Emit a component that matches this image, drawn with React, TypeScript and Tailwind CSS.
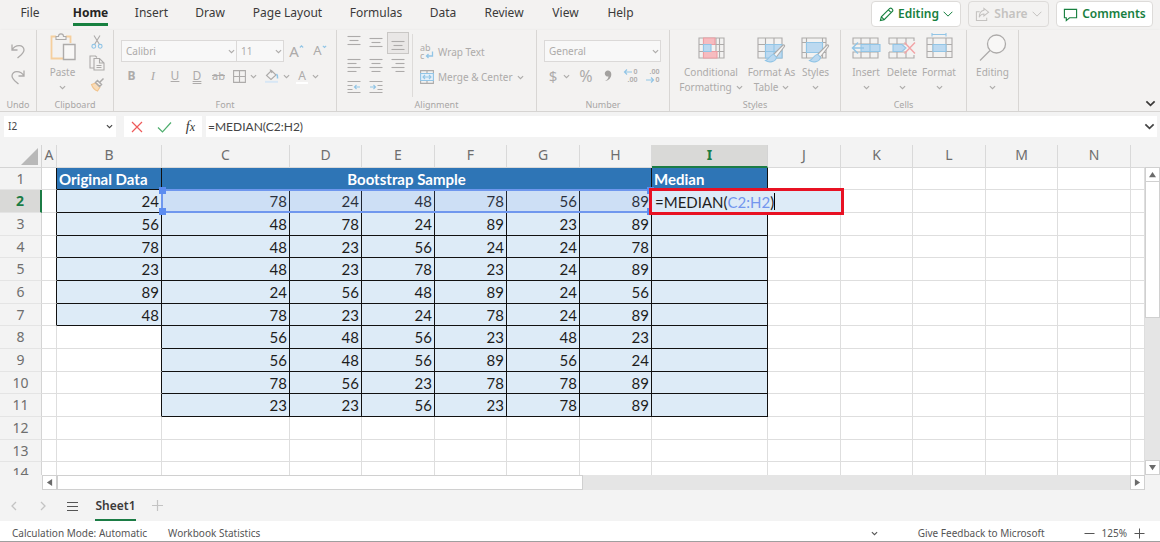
import React from "react";

type Kids = { children?: React.ReactNode };

const INK = "#adabaa";
const SKY = "#92c5e6";
const FILL = "#bcd9f0";

function Chevron({ className = "size-[7px]", thin }: { className?: string; thin?: boolean }) {
  return (
    <svg viewBox="0 0 8 8" className={"shrink-0 " + className} fill="none" stroke="currentColor" strokeWidth={thin ? 0.8 : 1.3}>
      <path d={thin ? "M0.500 2.200 4 5.700 7.500 2.200" : "M1 2.500 4 5.300 7 2.500"} />
    </svg>
  );
}

function Icon({ w, h, children }: Kids & { w: number; h: number }) {
  return (
    <svg viewBox={`0 0 ${w} ${h}`} width={w} height={h} className="shrink-0" fill="none" stroke={INK} strokeWidth="1.1">
      {children}
    </svg>
  );
}

function Group({ label, width, children }: Kids & { label?: string; width: string }) {
  return (
    <section className={"flex flex-col border-r border-[#d8d6d4] " + width}>
      <div className="h-[69px]">{children}</div>
      <div className="text-center text-[9px] leading-[12px] text-[#a8a6a5]">{label}</div>
    </section>
  );
}

function BigButton({ icon, lines, width, inline }: { icon: React.ReactNode; lines: string[]; width: string; inline?: boolean }) {
  return (
    <button className={"flex shrink-0 flex-col items-center pt-[7px] text-[10px] leading-[15px] text-[#adabaa] " + width}>
      <span className="flex h-7 items-start justify-center">{icon}</span>
      <span className="whitespace-nowrap">{lines[0]}</span>
      <span className="flex h-[15px] items-center gap-1 whitespace-nowrap">
        {inline ? lines[1] : null}
        <Chevron />
      </span>
    </button>
  );
}

function TinyButton({ label, width, children }: Kids & { label: string; width: string }) {
  return (
    <button aria-label={label} className={"flex h-5 shrink-0 items-center justify-center text-[#adabaa] " + width}>
      {children}
    </button>
  );
}

function Lines({ rows }: { rows: [number, number, number][] }) {
  return (
    <Icon w={14} h={14}>
      {rows.map(([x1, x2, y]) => (
        <path key={y} d={`M${x1} ${y}H${x2}`} />
      ))}
    </Icon>
  );
}

function PasteIcon() {
  return (
    <Icon w={26} h={28}>
      <path d="M6 3.500H1.500V25.500H13M16 3.500H20.500V10" stroke="#f5cf9e" strokeWidth="1.800" />
      <path d="M6 6.500V3.500H8.500C8.500 0 13.500 0 13.500 3.500H16V6.500Z" />
      <path d="M13.500 11.500H25V26.500H13.500Z" fill="#f8f7f6" strokeWidth="1.400" />
    </Icon>
  );
}

function ConditionalIcon() {
  return (
    <Icon w={27} h={22}>
      <path d="M1 1H26V21H1ZM1 7.500H26M1 14.500H26M5.500 1V21M18 1V21M21.500 1V21" />
      <path d="M5.500 1H17V7.500H5.500ZM5.500 14.500H19V21H5.500Z" fill="#f6bcc0" stroke="#ee9ea4" />
      <path d="M5.500 7.500H13V14.500H5.500Z" fill={FILL} stroke={SKY} />
    </Icon>
  );
}

function Brush() {
  return (
    <>
      <path d="M16 18 25.500 8.500C27 7 28.500 8.500 27 10L19 20.500Z" fill="#f8f7f6" stroke={INK} />
      <path d="M17 17.500C13 17 13 22 8.500 23.500C12 26 18.500 25 19.500 20.500Z" fill={FILL} stroke={SKY} />
    </>
  );
}

function FormatTableIcon() {
  return (
    <Icon w={29} h={26}>
      <path d="M1 1H25V21H1ZM1 7.500H25M1 14.500H25M8.500 1V21M17 1V21" />
      <path d="M8.500 7.500H25V21H8.500Z" fill={FILL} stroke={SKY} />
      <path d="M8.500 14.500H25M17 7.500V21" stroke={SKY} />
      <Brush />
    </Icon>
  );
}

function StylesIcon() {
  return (
    <Icon w={29} h={26}>
      <path d="M1 1H25V21H1ZM1 5.500H25M1 15.500H25M5.500 1V21M21.500 1V21" />
      <path d="M5.500 5.500H21.500V15.500H5.500Z" fill={FILL} stroke={SKY} />
      <Brush />
    </Icon>
  );
}

function InsertIcon() {
  return (
    <Icon w={30} h={22}>
      <path d="M2 7V1H27V7ZM2 15V21H27V15ZM10 1V7M19 1V7M10 15V21M19 15V21" />
      <path d="M10 7.500H29V14.500H10ZM19 7.500V14.500" fill={FILL} stroke={SKY} />
      <path d="M13 11H2M7 5.500 1.500 11 7 16.500" stroke={SKY} strokeWidth="1.500" />
    </Icon>
  );
}

function DeleteIcon() {
  return (
    <Icon w={28} h={22}>
      <path d="M1 7V1H26V4M1 7H18M1 15V21H26V18M1 15H18M9 1V7M18 1V7M9 15V21M18 15V21" />
      <path d="M5 7.500H14L18 11 14 14.500H5Z" fill={FILL} stroke={SKY} />
      <path d="M16.500 5.500 27 16.500M27 5.500 16.500 16.500" stroke="#f2a3a6" strokeWidth="1.400" />
    </Icon>
  );
}

function FormatIcon() {
  return (
    <Icon w={27} h={26}>
      <path d="M6 1.500H20M6 0V3.500M20 0V3.500" stroke={SKY} />
      <path d="M1 5H26V24.500H1ZM1 11.500H26M1 18.500H26M7 5V24.500M20 5V24.500" />
      <path d="M7 11.500H20V18.500H7Z" fill={FILL} stroke={SKY} />
    </Icon>
  );
}

const TABS = [
  ["File", "w-[60px]"],
  ["Home", "w-[61px]"],
  ["Insert", "w-[61px]"],
  ["Draw", "w-[56px]"],
  ["Page Layout", "w-[99px]"],
  ["Formulas", "w-[78px]"],
  ["Data", "w-[56px]"],
  ["Review", "w-[66px]"],
  ["View", "w-[57px]"],
  ["Help", "w-[53px]"],
];

function TopBar() {
  return (
    <header className="flex h-[30px] justify-between">
      <nav className="flex text-[#3b3a39]">
        {TABS.map(([name, width]) => (
          <button key={name} className={"flex h-[26px] flex-col items-center whitespace-nowrap text-[12px] leading-[26px] " + width}>
            <span className={name === "Home" ? "h-[26px] border-b-[3px] border-[#17803f] font-bold text-[#252423]" : ""}>{name}</span>
          </button>
        ))}
      </nav>
      <div className="flex items-start gap-[7px] pr-[7px] pt-px text-[12px] font-semibold text-[#17803f]">
        <button className="flex h-[26px] w-[90px] items-center justify-center gap-1 rounded-sm border border-[#dddbd9] bg-white">
          <svg viewBox="0 0 16 16" className="size-[15px]" fill="none" stroke="currentColor" strokeWidth="1.200">
            <path d="M1.500 14.500 2.500 10.500 11.500 1.500C13 0.500 15.500 3 14.500 4.500L5.500 13.500ZM10 3 13 6M2.500 10.500 5.500 13.500" />
          </svg>
          Editing
          <Chevron thin className="size-[10px]" />
        </button>
        <button className="flex h-[26px] w-[81px] items-center justify-center gap-1 rounded-sm border border-[#dddbd9] text-[#c4c2c0]">
          <svg viewBox="0 0 16 16" className="size-[15px]" fill="none" stroke="currentColor" strokeWidth="1.100">
            <path d="M5 5H1.500V14.500H12.500V11.500M9.500 1.500 14.500 5.500 9.500 9.500V7.500C7 7.500 5.500 8.500 4.500 11C4.500 6.500 7 4 9.500 3.500Z" />
          </svg>
          Share
          <Chevron thin className="size-[10px]" />
        </button>
        <button className="flex h-[26px] w-[97px] items-center justify-center gap-1 rounded-sm border border-[#dddbd9] bg-white">
          <svg viewBox="0 0 16 16" className="size-[15px]" fill="none" stroke="currentColor" strokeWidth="1.200">
            <path d="M1.500 2.500H14.500V11.500H7L3.500 14.500V11.500H1.500Z" />
          </svg>
          Comments
        </button>
      </div>
    </header>
  );
}

function FakeSelect({ label, value, width }: { label: string; value: string; width: string }) {
  return (
    <span className={"flex h-[22px] items-center border border-[#dbd9d8] bg-[#f8f8f8] pr-px text-[#adabaa] " + width}>
      <select aria-label={label} className="w-full min-w-0 flex-1 appearance-none bg-transparent pl-1 text-[10px] outline-none" defaultValue={value}>
        <option>{value}</option>
      </select>
      <Chevron />
    </span>
  );
}

function Decimals({ top, bottom, arrow }: { top: string; bottom: string; arrow: string }) {
  return (
    <span className="relative flex w-[15px] flex-col items-end text-[7px] font-semibold leading-[8px]">
      <span>{top}</span>
      <span>{bottom}</span>
      <svg viewBox="0 0 15 16" className="absolute inset-0 h-4 w-[15px]" fill="none" stroke={SKY} strokeWidth="1.200">
        <path d={arrow} />
      </svg>
    </span>
  );
}

function Ribbon() {
  return (
    <div className="flex h-[82px] border-b border-[#d6d4d2] shadow-sm">
      <Group label="Undo" width="w-[37px]">
        <div className="flex flex-col items-center gap-[6px] pt-[11px]">
          <TinyButton label="Undo" width="w-6">
            <Icon w={16} h={16}>
              <path d="M2 1.500V7H7.500M2 7C5 1.500 14 1 14 7C14 10 11 12 7.500 15" strokeWidth="1.300" />
            </Icon>
          </TinyButton>
          <TinyButton label="Redo" width="w-6">
            <Icon w={16} h={16}>
              <path d="M14 1.500V7H8.500M14 7C11 1.500 2 1 2 7C2 10 5 12 8.500 15" strokeWidth="1.300" />
            </Icon>
          </TinyButton>
        </div>
      </Group>
      <Group label="Clipboard" width="w-[77px]">
        <div className="flex">
          <BigButton icon={<span className="-mt-1"><PasteIcon /></span>} lines={["Paste"]} width="w-[51px]" />
          <div className="flex flex-col items-center gap-px pl-[1px] pt-[2px]">
            <TinyButton label="Cut" width="w-4">
              <Icon w={12} h={14}>
                <path d="M3 0.500 8.500 9.500M9 0.500 3.500 9.500" />
                <circle cx="2.800" cy="11.300" r="1.900" stroke={SKY} />
                <circle cx="9.200" cy="11.300" r="1.900" stroke={SKY} />
              </Icon>
            </TinyButton>
            <TinyButton label="Copy" width="w-4">
              <Icon w={16} h={16}>
                <path d="M5 13H1V1H6.500L8 2.500M5 3.500H10.500L15 8V15H5ZM10.500 3.500V8H15M7.500 10.500H12.500M7.500 12.500H12.500" />
              </Icon>
            </TinyButton>
            <TinyButton label="Format Painter" width="w-4">
              <Icon w={15} h={15}>
                <path d="M1.500 7.500 6 6 10 10 7.500 14C5 13 2.500 10.500 1.500 7.500Z" fill="#f8dcb9" stroke="#f2c48d" />
                <path d="M5.500 5.500 7.500 3.500 11.500 7.500 9.500 9.500ZM9.500 5.500 13.500 1.500" strokeWidth="1.500" />
              </Icon>
            </TinyButton>
          </div>
        </div>
      </Group>
      <Group label="Font" width="w-[223px]">
        <div className="flex flex-col gap-1 pl-[7px] pt-[10px]">
          <div className="flex items-center">
            <FakeSelect label="Font name" value="Calibri" width="w-[116px]" />
            <FakeSelect label="Font size" value="11" width="w-[47px] border-l-0" />
            <TinyButton label="Grow font" width="w-[25px]">
              <span className="text-[15px]">A</span>
              <svg viewBox="0 0 6 4" className="mb-2 w-[5px]" fill="none" stroke={SKY} strokeWidth="1.300"><path d="M1 3 3 1 5 3" /></svg>
            </TinyButton>
            <TinyButton label="Shrink font" width="w-[22px]">
              <span className="text-[13px]">A</span>
              <svg viewBox="0 0 6 4" className="mb-2 w-[5px]" fill="none" stroke={SKY} strokeWidth="1.300"><path d="M1 1 3 3 5 1" /></svg>
            </TinyButton>
          </div>
          <div className="flex items-center text-[12px]">
            <TinyButton label="Bold" width="w-[21px]"><b>B</b></TinyButton>
            <TinyButton label="Italic" width="w-[22px]"><i className="font-['Liberation_Serif',serif] text-[13px]">I</i></TinyButton>
            <TinyButton label="Underline" width="w-[22px]"><u>U</u></TinyButton>
            <TinyButton label="Double underline" width="w-[22px]"><span className="underline decoration-double">D</span></TinyButton>
            <TinyButton label="Strikethrough" width="w-[21px]"><span className="text-[11px] line-through">ab</span></TinyButton>
            <TinyButton label="Borders" width="w-[32px] gap-1">
              <Icon w={13} h={13}><path d="M0.600 0.600H12.400V12.400H0.600ZM6.500 0.600V12.400M0.600 6.500H12.400" /></Icon>
              <Chevron />
            </TinyButton>
            <TinyButton label="Fill colour" width="w-[32px] gap-1">
              <Icon w={14} h={14}>
                <path d="M1.500 6.500 6.500 1.500 11 6 6 10.500ZM5 0.500 7 4" />
                <path d="M11.500 5C13 6.500 12.500 8.500 12.500 9.500" stroke={SKY} strokeWidth="1.500" />
                <path d="M0 12.800H13" stroke="#d8e7f5" strokeWidth="2" />
              </Icon>
              <Chevron />
            </TinyButton>
            <TinyButton label="Font colour" width="w-[29px] gap-1">
              <span className="border-b-2 border-white px-0.5 leading-[13px]">A</span>
              <Chevron />
            </TinyButton>
          </div>
        </div>
      </Group>
      <Group label="Alignment" width="w-[200px]">
        <div className="flex">
          <div className="grid grid-cols-3 justify-items-center pl-[6px] pt-[2px]">
            <TinyButton label="Top align" width="w-[22px]"><Lines rows={[[0.5, 13.5, 1.5], [2.5, 11.5, 5.5], [0.5, 13.5, 9.5]]} /></TinyButton>
            <TinyButton label="Middle align" width="w-[22px]"><Lines rows={[[0.5, 13.5, 3.5], [2.5, 11.5, 7.5], [0.5, 13.5, 11.5]]} /></TinyButton>
            <TinyButton label="Bottom align" width="h-[22px] w-[22px] border border-[#c9c7c5] bg-[#e9e7e6]"><Lines rows={[[0.5, 13.5, 5.5], [2.5, 11.5, 9.5], [0.5, 13.5, 13.5]]} /></TinyButton>
            <TinyButton label="Align left" width="h-[22px] w-[22px]"><Lines rows={[[0.5, 13.5, 1.5], [0.5, 9.5, 5.5], [0.5, 13.5, 9.5], [0.5, 9.5, 13.5]]} /></TinyButton>
            <TinyButton label="Align centre" width="h-[22px] w-[22px]"><Lines rows={[[0.5, 13.5, 1.5], [2.5, 11.5, 5.5], [0.5, 13.5, 9.5], [2.5, 11.5, 13.5]]} /></TinyButton>
            <TinyButton label="Align right" width="h-[22px] w-[22px]"><Lines rows={[[0.5, 13.5, 1.5], [4.5, 13.5, 5.5], [0.5, 13.5, 9.5], [4.5, 13.5, 13.5]]} /></TinyButton>
            <TinyButton label="Decrease indent" width="h-[22px] w-[22px]">
              <Icon w={14} h={14}><path d="M0.500 1.500H13.500M0.500 5.500H5.500M0.500 9.500H5.500M0.500 12.500H13.500" /><path d="M13 7H7.500M9.500 5 7.500 7 9.500 9" stroke={SKY} /></Icon>
            </TinyButton>
            <TinyButton label="Increase indent" width="h-[22px] w-[22px]">
              <Icon w={14} h={14}><path d="M0.500 1.500H13.500M8.500 5.500H13.500M8.500 9.500H13.500M0.500 12.500H13.500" /><path d="M1 7H6.500M4.500 5 6.500 7 4.500 9" stroke={SKY} /></Icon>
            </TinyButton>
          </div>
          <div className="ml-[3px] mt-1 h-[63px] border-l border-[#dddbd9]" />
          <div className="flex flex-col items-start gap-[5px] pl-[7px] pt-3 text-[10px]">
            <TinyButton label="Wrap Text" width="gap-1">
              <span className="relative flex w-[14px] flex-col items-start text-[9px] leading-[8px]">
                <span>ab</span>
                <span>c</span>
                <svg viewBox="0 0 14 16" className="absolute inset-0 h-4 w-[14px]" fill="none" stroke={SKY} strokeWidth="1.300">
                  <path d="M12.500 7.500V12H6.500M8.500 10 6.500 12 8.500 14" />
                </svg>
              </span>
              Wrap Text
            </TinyButton>
            <TinyButton label="Merge & Center" width="gap-1">
              <Icon w={14} h={14}>
                <path d="M0.600 0.600H13.400V13.400H0.600ZM7 0.600V3M7 11V13.400" />
                <path d="M0.600 3.500H13.400V10.500H0.600Z" fill="#e5f0f9" stroke={SKY} />
                <path d="M3 7H11M5 5 3 7 5 9M9 5 11 7 9 9" stroke={SKY} />
              </Icon>
              Merge &amp; Center
              <Chevron />
            </TinyButton>
          </div>
        </div>
      </Group>
      <Group label="Number" width="w-[133px]">
        <div className="flex flex-col gap-1 pl-[7px] pt-[10px]">
          <FakeSelect label="Number format" value="General" width="w-[117px]" />
          <div className="flex">
            <TinyButton label="Currency" width="w-[31px] gap-[6px]"><span className="text-[15px]">$</span><Chevron /></TinyButton>
            <TinyButton label="Percent" width="w-[22px]"><span className="text-[16px]">%</span></TinyButton>
            <TinyButton label="Comma" width="w-[22px]">
              <svg viewBox="0 0 8 12" className="h-3 w-2" fill="#a3a19f"><path d="M4 0.500A3 3 0 1 0 4.500 6.400C4.300 8.500 3 10 1 11C5 10.500 7.500 7.500 7.300 4C7.200 1.800 5.800 0.500 4 0.500Z" /></svg>
            </TinyButton>
            <TinyButton label="Increase decimal" width="w-[22px]">
              <Decimals top="0" bottom=".00" arrow="M9 4H1.500M4 1.500 1.500 4 4 6.500" />
            </TinyButton>
            <TinyButton label="Decrease decimal" width="w-[22px]">
              <Decimals top=".00" bottom="0" arrow="M1 12H8.500M6 9.500 8.500 12 6 14.500" />
            </TinyButton>
          </div>
        </div>
      </Group>
      <Group label="Styles" width="w-[171px]">
        <div className="flex pl-[6px]">
          <BigButton icon={<ConditionalIcon />} lines={["Conditional", "Formatting"]} width="w-[70px]" inline />
          <BigButton icon={<FormatTableIcon />} lines={["Format As", "Table"]} width="w-[51px]" inline />
          <BigButton icon={<StylesIcon />} lines={["Styles"]} width="w-[37px]" />
        </div>
      </Group>
      <Group label="Cells" width="w-[126px]">
        <div className="flex pl-[7px]">
          <BigButton icon={<InsertIcon />} lines={["Insert"]} width="w-[36px]" />
          <BigButton icon={<DeleteIcon />} lines={["Delete"]} width="w-[36px]" />
          <BigButton icon={<span className="-mt-1"><FormatIcon /></span>} lines={["Format"]} width="w-[38px]" />
        </div>
      </Group>
      <Group width="w-[52px]">
        <BigButton
          icon={
            <span className="-mt-1">
              <Icon w={28} h={28}>
                <circle cx="17.500" cy="11" r="9" fill="#f8f7f6" strokeWidth="1.300" />
                <path d="M11 17.500 1 27.500" strokeWidth="1.300" />
              </Icon>
            </span>
          }
          lines={["Editing"]}
          width="w-full"
        />
      </Group>
      <div className="flex flex-1 items-end justify-end pb-[2px] pr-1 text-[#3b3a39]">
        <button aria-label="Collapse ribbon"><Chevron className="size-[11px]" /></button>
      </div>
    </div>
  );
}

function FormulaBar() {
  return (
    <div className="flex h-[33px] items-start gap-2 bg-[#f3f3f3] pl-1 pr-[3px] pt-1">
      <span className="flex h-[21px] w-[112px] items-center bg-white pr-[3px] text-[#444]">
        <input aria-label="Name box" defaultValue="I2" className="min-w-0 flex-1 pl-1 text-[10px] outline-none" />
        <Chevron />
      </span>
      <div className="flex h-[21px] w-[78px] items-center justify-between bg-white px-[7px]">
        <button aria-label="Cancel">
          <svg viewBox="0 0 12 12" className="size-3" fill="none" stroke="#ee5a5a" strokeWidth="1.200"><path d="M1 1 11 11M11 1 1 11" /></svg>
        </button>
        <button aria-label="Enter">
          <svg viewBox="0 0 15 12" className="h-3 w-[15px]" fill="none" stroke="#4fae6e" strokeWidth="1.200"><path d="M1 6.500 5.500 11 14 1.500" /></svg>
        </button>
        <button aria-label="Insert function" className="font-['Liberation_Serif',serif] text-[14px] italic leading-none text-[#333]">
          f<span className="text-[12px]">x</span>
        </button>
      </div>
      <span className="-ml-1 flex h-[21px] flex-1 items-center bg-white text-[#444]">
        <input aria-label="Formula bar" defaultValue="=MEDIAN(C2:H2)" className="min-w-0 flex-1 pl-[2px] font-[Lato,sans-serif] text-[12px] outline-none" />
        <Chevron className="mr-[2px] size-[11px]" />
      </span>
    </div>
  );
}

const COLS: [string, string][] = [
  ["A", "w-[15px]"],
  ["B", "w-[105px]"],
  ["C", "w-[128px]"],
  ["D", "w-[72px]"],
  ["E", "w-[73px]"],
  ["F", "w-[72px]"],
  ["G", "w-[73px]"],
  ["H", "w-[72px]"],
  ["I", "w-[116px]"],
  ["J", "w-[73px]"],
  ["K", "w-[72px]"],
  ["L", "w-[73px]"],
  ["M", "w-[72px]"],
  ["N", "w-[73px]"],
  ["", ""],
];

const ORIGINAL = [24, 56, 78, 23, 89, 48];
const SAMPLES = [
  [78, 24, 48, 78, 56, 89],
  [48, 78, 24, 89, 23, 89],
  [48, 23, 56, 24, 24, 78],
  [48, 23, 78, 23, 24, 89],
  [24, 56, 48, 89, 24, 56],
  [78, 23, 24, 78, 24, 89],
  [56, 48, 56, 23, 48, 23],
  [56, 48, 56, 89, 56, 24],
  [78, 56, 23, 78, 78, 89],
  [23, 23, 56, 23, 78, 89],
];
const SHORT_ROWS = [1, 4, 7, 10, 13];

const inTable = (row: number, col: number) =>
  (row <= 7 && col >= 1 && col <= 8) || (row <= 11 && col >= 2 && col <= 8);

function cellClass(row: number, col: number) {
  const own = inTable(row, col);
  const right = own || inTable(row, col + 1) ? " border-r-[#111]" : " border-r-[#dedede]";
  const bottom = own ? " border-b-[#111]" : " border-b-[#dedede]";
  const fill = !own ? " bg-white" : row === 1 ? " bg-[#2e75b6] font-bold text-white" : " bg-[#ddebf7] text-right text-[#1d1d1d]";
  return "relative border-r border-b p-0 whitespace-nowrap leading-[20px]" + right + bottom + fill;
}

function Handle({ place }: { place: string }) {
  return <span className={"absolute size-[7px] bg-[#5c8cf0] " + place} />;
}

function RangeOutline() {
  return (
    <div className="pointer-events-none absolute -left-px -top-px z-10 h-[24px] w-[491px] border-y-2 border-l-2 border-[#6f97ee] bg-[#6f97ee]/15">
      <Handle place="-left-1 -top-1" />
      <Handle place="-left-1 -bottom-1" />
      <Handle place="-right-[2px] -top-1" />
      <Handle place="-right-[2px] -bottom-1" />
    </div>
  );
}

function CellEditor() {
  return (
    <div
      role="textbox"
      aria-label="I2"
      className="absolute -left-[3px] -top-[2px] z-20 flex h-[27px] w-[195px] items-center border-[3px] border-[#e81123] bg-[#ddebf7] pl-[3px] text-left text-[#1d1d1d]"
    >
      =MEDIAN(<span className="text-[#7396ee]">C2:H2</span>)<span className="h-[17px] border-l border-black" />
    </div>
  );
}

function Row({ row }: { row: number }) {
  const active = row === 2;
  const header = (
    <th
      scope="row"
      className={
        "border-b border-b-[#e4e4e4] p-0 font-['Noto_Sans',sans-serif] text-[14px] leading-[20px] " +
        (active ? "border-r-2 border-r-[#1c7c45] bg-[#d9d9d7] font-bold text-[#1c7c45]" : "border-r border-r-[#d4d4d4] bg-[#f3f3f3] font-normal text-[#6e6e6e]")
      }
    >
      {row}
    </th>
  );
  const cols = COLS.map((_, i) => i);
  return (
    <tr className={SHORT_ROWS.includes(row) ? "h-[22px]" : "h-[23px]"}>
      {header}
      {row === 1
        ? cols
            .filter((c) => c < 3 || c > 7)
            .map((c) => (
              <td key={c} colSpan={c === 2 ? 6 : 1} className={cellClass(row, c) + (c === 2 ? " text-center" : " pl-[2px]")}>
                {c === 1 ? "Original Data" : c === 2 ? "Bootstrap Sample" : c === 8 ? "Median" : null}
              </td>
            ))
        : cols.map((c) => (
            <td key={c} className={cellClass(row, c) + (c === 0 || c > 8 ? "" : " pr-[2px]")}>
              {c === 1 ? ORIGINAL[row - 2] : c >= 2 && c <= 7 ? SAMPLES[row - 2]?.[c - 2] : null}
              {active && c === 2 ? <RangeOutline /> : null}
              {active && c === 8 ? <CellEditor /> : null}
            </td>
          ))}
    </tr>
  );
}

function Arrow({ label, d }: { label: string; d: string }) {
  return (
    <button aria-label={label} className="flex size-[15px] shrink-0 items-center justify-center border border-[#d0d0d0] bg-white">
      <svg viewBox="0 0 8 8" className="size-[7px]" fill="#6b6b6b"><path d={d} /></svg>
    </button>
  );
}

function Sheet() {
  return (
    <main className="flex min-h-0 flex-1 flex-col overflow-hidden bg-[#f3f3f3]">
      <div className="flex min-h-0 flex-1 overflow-hidden">
        <div className="min-w-0 flex-1 overflow-hidden">
          <table className="w-full table-fixed border-separate border-spacing-0 font-[Lato,sans-serif] text-[15px]">
            <thead className="font-['Noto_Sans',sans-serif] text-[14px] text-[#6e6e6e]">
              <tr className="h-[23px]">
                <th className="w-[42px] border-b border-r border-[#d4d4d4] p-0">
                  <svg viewBox="0 0 17 17" className="ml-[21px] size-[17px]" fill="#b8b8b8"><path d="M17 0V17H0Z" /></svg>
                </th>
                {COLS.map(([name, width]) => (
                  <th
                    key={name}
                    scope="col"
                    className={
                      "border-r p-0 align-top leading-[20px] " + width +
                      (name === "I" ? " border-b-2 border-r-[#d4d4d4] border-b-[#1c7c45] bg-[#d9d9d7] font-bold text-[#1c7c45]" : " border-b border-[#d9d9d9] font-normal") +
                      (name === "" ? " border-r-0" : "")
                    }
                  >
                    {name}
                  </th>
                ))}
              </tr>
            </thead>
            <tbody>
              {Array.from({ length: 14 }, (_, i) => (
                <Row key={i} row={i + 1} />
              ))}
            </tbody>
          </table>
        </div>
        <div className="flex w-[15px] flex-col pt-[22px]">
          <Arrow label="Scroll up" d="M4 1 8 7H0Z" />
          <div className="h-[136px] border-x border-b border-[#d0d0d0] bg-white" />
          <div className="flex-1 bg-[#e5e5e5]" />
          <Arrow label="Scroll down" d="M0 1H8L4 7Z" />
        </div>
      </div>
      <div className="flex h-[15px] pl-[42px] pr-[15px]">
        <Arrow label="Scroll left" d="M7 0V8L1 4Z" />
        <div className="w-[526px] border border-[#d0d0d0] bg-white" />
        <div className="flex-1 bg-[#e5e5e5]" />
        <Arrow label="Scroll right" d="M1 0V8L7 4Z" />
      </div>
    </main>
  );
}

function SheetTabs() {
  return (
    <div className="flex h-[31px] items-center bg-[#f3f3f3] pl-[10px] text-[#c3c3c3]">
      <button aria-label="Previous sheet">
        <svg viewBox="0 0 8 10" className="h-[10px] w-2" fill="none" stroke="currentColor" strokeWidth="1.300"><path d="M6 1 2 5 6 9" /></svg>
      </button>
      <button aria-label="Next sheet" className="ml-[21px]">
        <svg viewBox="0 0 8 10" className="h-[10px] w-2" fill="none" stroke="currentColor" strokeWidth="1.300"><path d="M2 1 6 5 2 9" /></svg>
      </button>
      <button aria-label="All sheets" className="ml-5 text-[#555]">
        <svg viewBox="0 0 11 10" className="h-[10px] w-[11px]" stroke="currentColor" strokeWidth="1.200"><path d="M0 1.500H11M0 5.500H11M0 9.500H11" /></svg>
      </button>
      <button className="ml-[17px] flex h-[31px] w-[41px] justify-center border-b-2 border-[#1c7c45] text-[12px] font-semibold leading-[31px] text-[#3b3a39]">Sheet1</button>
      <button aria-label="New sheet" className="ml-[16px]">
        <svg viewBox="0 0 11 11" className="size-[11px]" stroke="currentColor" strokeWidth="1.200"><path d="M5.500 0V11M0 5.500H11" /></svg>
      </button>
    </div>
  );
}

function StatusBar() {
  return (
    <footer className="flex h-[21px] items-start border-b border-[#9f9f9f] bg-white pl-3 pr-[15px] pt-[2px] text-[10px] leading-[20px] text-[#555]">
      <span>Calculation Mode: Automatic</span>
      <span className="ml-[21px]">Workbook Statistics</span>
      <div className="ml-auto flex items-center">
        <button aria-label="Status options"><Chevron /></button>
        <a href="#feedback" className="ml-[40px]">Give Feedback to Microsoft</a>
        <button aria-label="Zoom out" className="ml-[39px]">
          <svg viewBox="0 0 11 11" className="size-[11px]" stroke="currentColor"><path d="M0.500 5.500H10.500" /></svg>
        </button>
        <span className="mx-[7px]">125%</span>
        <button aria-label="Zoom in">
          <svg viewBox="0 0 11 11" className="size-[11px]" stroke="currentColor"><path d="M0.500 5.500H10.500M5.500 0.500V10.500" /></svg>
        </button>
      </div>
    </footer>
  );
}

export default function App() {
  return (
    <div className="flex h-screen flex-col overflow-hidden bg-[#f3f2f1] font-['Noto_Sans',sans-serif]">
      <TopBar />
      <Ribbon />
      <FormulaBar />
      <Sheet />
      <SheetTabs />
      <StatusBar />
    </div>
  );
}
